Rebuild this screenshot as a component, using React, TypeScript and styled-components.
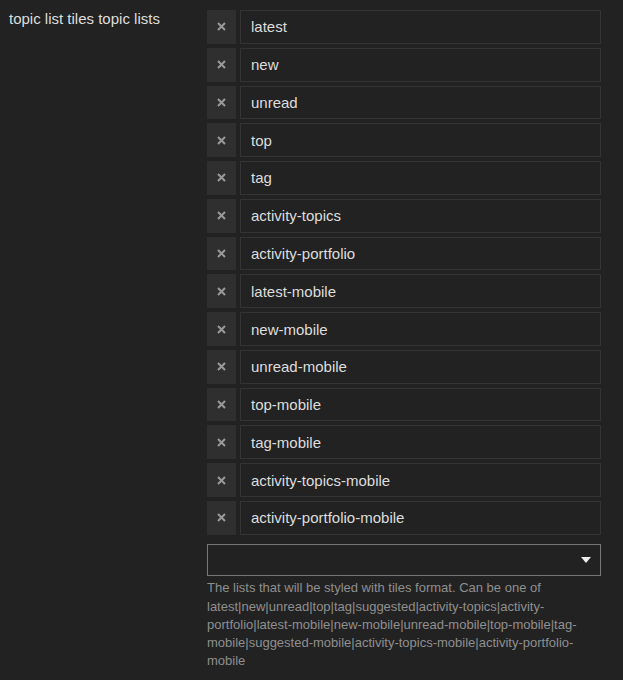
import * as React from 'react';
import styled, { createGlobalStyle } from 'styled-components';

const items = [
  'latest',
  'new',
  'unread',
  'top',
  'tag',
  'activity-topics',
  'activity-portfolio',
  'latest-mobile',
  'new-mobile',
  'unread-mobile',
  'top-mobile',
  'tag-mobile',
  'activity-topics-mobile',
  'activity-portfolio-mobile',
];

const GlobalStyle = createGlobalStyle`
  html, body {
    margin: 0;
    padding: 0;
    background: #222222;
  }
  body {
    font-family: "Liberation Sans", Arial, sans-serif;
    color: #dddddd;
  }
`;

const Setting = styled.div`
  display: flex;
  flex-direction: row;
  align-items: flex-start;
  padding: 10px 22px 0 9px;
  min-height: 680px;
  box-sizing: border-box;
`;

const Label = styled.div`
  width: 198px;
  flex: 0 0 198px;
  font-size: 15px;
  line-height: 18px;
  color: #dddddd;
`;

const Value = styled.div`
  flex: 1;
  display: flex;
  flex-direction: column;
`;

const List = styled.div`
  display: flex;
  flex-direction: column;
  gap: 4px;
`;

const Row = styled.div`
  display: flex;
  flex-direction: row;
  gap: 4px;
  height: 33.77px;
`;

const RemoveButton = styled.button`
  width: 29px;
  flex: 0 0 29px;
  height: 100%;
  border: none;
  padding: 0;
  margin: 0;
  background: #2f2f2f;
  color: #999999;
  display: flex;
  align-items: center;
  justify-content: center;
  cursor: pointer;
`;

const ItemInput = styled.div`
  flex: 1;
  height: 100%;
  box-sizing: border-box;
  border: 1px solid #343434;
  background: #222222;
  padding: 0 10px;
  display: flex;
  align-items: center;
  font-size: 15px;
  color: #dddddd;
`;

const Chooser = styled.div`
  margin-top: 9.5px;
  height: 32px;
  box-sizing: border-box;
  border: 1px solid #777777;
  background: #222222;
  display: flex;
  align-items: center;
  justify-content: flex-end;
  padding-right: 9px;
`;

const Description = styled.div`
  margin-top: 3px;
  font-size: 13px;
  line-height: 18.3px;
  color: #8f8f8f;
  width: 394px;
`;

const XIcon = () => (
  <svg width="9" height="9" viewBox="0 0 9 9">
    <path d="M1 1 L8 8 M8 1 L1 8" stroke="#9a9a9a" strokeWidth="2" />
  </svg>
);

const Caret = () => (
  <svg width="10" height="6" viewBox="0 0 10 6">
    <path d="M0 0 H10 L5 6 Z" fill="#eeeeee" />
  </svg>
);

export default function App() {
  return (
    <>
      <GlobalStyle />
      <Setting>
        <Label>topic list tiles topic lists</Label>
        <Value>
          <List>
            {items.map((item) => (
              <Row key={item}>
                <RemoveButton>
                  <XIcon />
                </RemoveButton>
                <ItemInput>{item}</ItemInput>
              </Row>
            ))}
          </List>
          <Chooser>
            <Caret />
          </Chooser>
          <Description>
            The lists that will be styled with tiles format. Can be one of
            latest|new|unread|top|tag|suggested|activity-topics|activity-portfolio|latest-mobile|new-mobile|unread-mobile|top-mobile|tag-mobile|suggested-mobile|activity-topics-mobile|activity-portfolio-mobile
          </Description>
        </Value>
      </Setting>
    </>
  );
}
